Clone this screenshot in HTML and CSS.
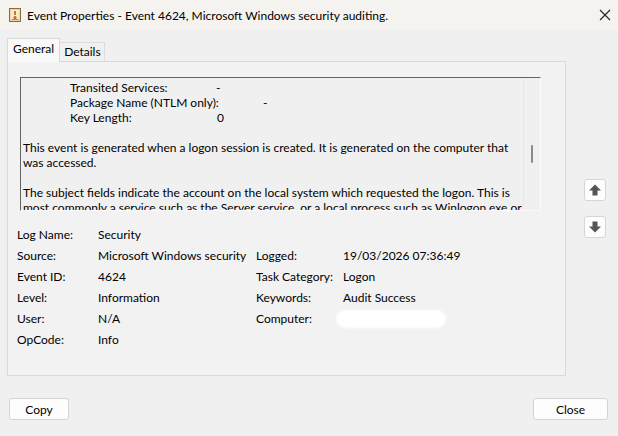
FILE: index.html
```html
<!DOCTYPE html>
<html>
<head>
<meta charset="utf-8">
<link rel="stylesheet" href="styles.css">
</head>
<body>
<div class="window">
  <div class="titlebar">
    <svg class="app-icon" width="12" height="14" viewBox="0 0 12 14">
      <rect x="0.5" y="0.5" width="11" height="13" fill="#e9d9a8" stroke="#8a6a3a"/>
      <rect x="2" y="2" width="8" height="10" fill="#f6ecc6"/>
      <path d="M6 3 L6 7" stroke="#c0392b" stroke-width="1.4"/>
      <circle cx="6" cy="9.5" r="1.6" fill="#d0564a"/>
      <path d="M2.5 11.5 H9.5" stroke="#b08850" stroke-width="1"/>
    </svg>
    <span class="title">Event Properties - Event 4624, Microsoft Windows security auditing.</span>
    <span class="close-x">
      <svg width="12" height="12" viewBox="0 0 12 12"><path d="M1 1 L11 11 M11 1 L1 11" stroke="#222" stroke-width="1.1"/></svg>
    </span>
  </div>

  <div class="main">
    <div class="tabbox">
      <div class="tabs">
        <div class="tab active">General</div>
        <div class="tab">Details</div>
      </div>
      <div class="panel">
        <div class="textbox">
          <div class="text">
            <div class="line"><span class="ind"></span><span class="k1">Transited Services:</span><span>-</span></div>
            <div class="line"><span class="ind"></span><span class="k2">Package Name (NTLM only):</span><span>-</span></div>
            <div class="line"><span class="ind"></span><span class="k3">Key Length:</span><span>0</span></div>
            <div class="line">&nbsp;</div>
            <div class="line">This event is generated when a logon session is created. It is generated on the computer that</div>
            <div class="line">was accessed.</div>
            <div class="line">&nbsp;</div>
            <div class="line">The subject fields indicate the account on the local system which requested the logon. This is</div>
            <div class="line">most commonly a service such as the Server service, or a local process such as Winlogon.exe or</div>
          </div>
          <div class="scrollbar"><div class="thumb"></div></div>
        </div>
        <div class="info">
          <span>Log Name:</span><span>Security</span><span></span><span></span>
          <span>Source:</span><span>Microsoft Windows security</span><span>Logged:</span><span>19/03/2026 07:36:49</span>
          <span>Event ID:</span><span>4624</span><span>Task Category:</span><span>Logon</span>
          <span>Level:</span><span>Information</span><span>Keywords:</span><span>Audit Success</span>
          <span>User:</span><span>N/A</span><span>Computer:</span><span class="redacted-cell"><span class="redacted"></span></span>
          <span>OpCode:</span><span>Info</span><span></span><span></span>
        </div>
      </div>
    </div>
    <div class="side">
      <div class="arrow-btn">
        <svg width="14" height="14" viewBox="0 0 14 14"><path d="M7 1.5 L13 7.5 L9.5 7.5 L9.5 12.5 L4.5 12.5 L4.5 7.5 L1 7.5 Z" fill="#555"/></svg>
      </div>
      <div class="arrow-btn">
        <svg width="14" height="14" viewBox="0 0 14 14"><path d="M7 12.5 L13 6.5 L9.5 6.5 L9.5 1.5 L4.5 1.5 L4.5 6.5 L1 6.5 Z" fill="#555"/></svg>
      </div>
    </div>
  </div>

  <div class="footer">
    <button class="btn copy">Copy</button>
    <button class="btn close">Close</button>
  </div>
</div>
</body>
</html>
```

FILE: styles.css
```css
* { box-sizing: border-box; }
body {
  margin: 0;
  font-family: Lato, "Open Sans", "Liberation Sans", sans-serif;
  font-size: 12px;
  color: #000;
  background: #f0f0f0;
}
.window {
  width: 618px;
  height: 436px;
  background: #f0f0f0;
  display: flex;
  flex-direction: column;
  overflow: hidden;
}
.titlebar {
  height: 30px;
  flex: none;
  display: flex;
  align-items: center;
  padding-left: 9px;
  background: #f5f3ef;
}
.app-icon { margin-right: 6px; flex: none; }
.title { font-size: 12px; white-space: nowrap; }
.close-x {
  margin-left: auto;
  width: 26px;
  display: flex;
  justify-content: center;
  align-items: center;
}
.main {
  display: flex;
  padding: 8px 0 0 7px;
}
.tabbox { width: 559px; flex: none; }
.tabs { display: flex; height: 23px; align-items: flex-end; }
.tab {
  height: 19px;
  padding: 0 3px 0 4px;
  line-height: 18px;
  border: 1px solid #dcdcdc;
  border-bottom: none;
  background: #f0f0f0;
}
.tab.active {
  line-height: 20px;
  background: #f9f9f9;
  padding: 0 5px;
  border-color: #d9d9d9;
  position: relative;
  z-index: 1;
  margin-bottom: -1px;
  height: 24px;
}
.tab + .tab { border-left: none; }
.panel {
  height: 315px;
  border: 1px solid #d9d9d9;
  background: #f2f2f2;
  padding: 15px 0 0 12px;
}
.textbox {
  width: 521px;
  height: 134px;
  display: flex;
  border-top: 1px solid #646464;
  border-left: 1px solid #646464;
  border-right: 1px solid #fafafa;
  border-bottom: 1px solid #fafafa;
  background: #f0f0f0;
  overflow: hidden;
}
.text {
  flex: 1;
  padding: 2px 0 0 2px;
  overflow: hidden;
}
.line {
  height: 15px;
  line-height: 15px;
  white-space: nowrap;
}
.ind { display: inline-block; width: 47px; }
.k1 { display: inline-block; width: 146px; }
.k2 { display: inline-block; width: 193px; }
.k3 { display: inline-block; width: 147px; }
.scrollbar {
  width: 17px;
  flex: none;
  border-left: 1px solid #e8e8e8;
  position: relative;
}
.thumb {
  position: absolute;
  left: 7px;
  top: 67px;
  width: 2px;
  height: 18px;
  background: #8a8a8a;
  border-radius: 1px;
}
.info {
  display: grid;
  grid-template-columns: 81px 158px 87px auto;
  grid-auto-rows: 21px;
  margin-top: 13px;
  margin-left: -3px;
  align-items: center;
  white-space: nowrap;
}
.redacted-cell { display: flex; align-items: center; }
.redacted {
  display: block;
  width: 110px;
  height: 18px;
  margin-left: -7px;
  background: #ffffff;
  border-radius: 9px;
  filter: blur(1px);
}
.side {
  margin-left: 18px;
  padding-top: 141px;
  display: flex;
  flex-direction: column;
  gap: 15px;
}
.arrow-btn {
  width: 22px;
  height: 22px;
  background: #fdfdfd;
  border: 1px solid #d6d6d6;
  border-radius: 3px;
  display: flex;
  align-items: center;
  justify-content: center;
}
.footer {
  display: flex;
  justify-content: space-between;
  padding: 22px 10px 0 9px;
}
.btn {
  height: 22px;
  font-family: inherit;
  font-size: 12px;
  background: #fdfdfd;
  border: 1px solid #d4d4d4;
  border-radius: 3px;
  padding: 0;
  color: #000;
}
.btn.copy { width: 60px; }
.btn.close { width: 75px; }
```
